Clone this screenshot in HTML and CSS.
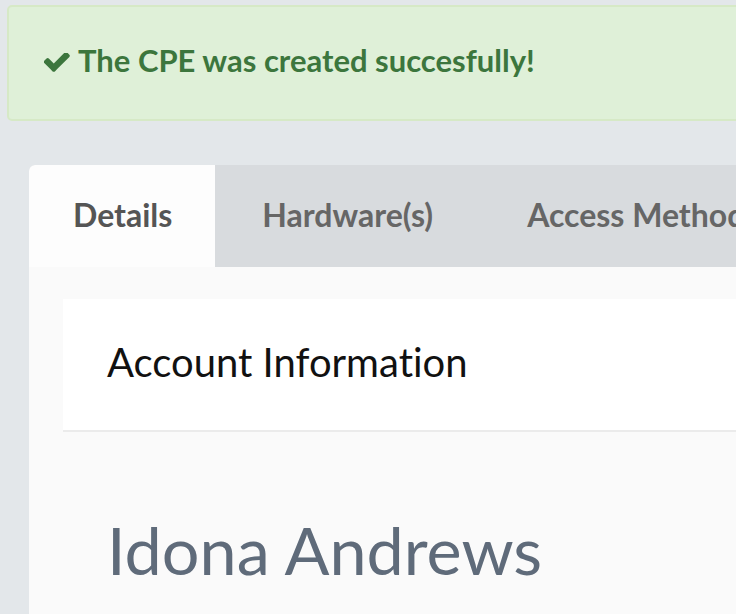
FILE: index.html
```html
<!DOCTYPE html>
<html>
<head>
<meta charset="utf-8">
<link rel="stylesheet" href="styles.css">
</head>
<body>
<div class="page">
  <div class="alert">
    <svg class="check" viewBox="140 400 1535 1130" width="26" height="19"><path d="M1671 566q0 40-28 68l-724 724-136 136q-28 28-68 28t-68-28l-136-136-362-362q-28-28-28-68t28-68l136-136q28-28 68-28t68 28l294 295 656-657q28-28 68-28t68 28l136 136q28 28 28 68z" fill="#3c763d"/></svg>
    <span>The CPE was created succesfully!</span>
  </div>
  <div class="card">
    <div class="tabs">
      <div class="tab active">Details</div>
      <div class="tab">Hardware(s)</div>
      <div class="tab">Access Methods</div>
    </div>
    <div class="tab-body">
      <div class="panel">
        <div class="panel-head">Account Information</div>
        <div class="panel-body">
          <h1 class="name">Idona Andrews</h1>
        </div>
      </div>
    </div>
  </div>
</div>
</body>
</html>
```
FILE: styles.css
```css
html, body { margin: 0; padding: 0; }
body {
  background: #e3e7ea;
  font-family: Lato, "Open Sans", sans-serif;
  font-variant-ligatures: none;
  overflow: hidden;
}
.page { width: 736px; height: 614px; overflow: hidden; padding-top: 5px; box-sizing: border-box; }
.alert {
  margin-left: 7px;
  width: 800px;
  height: 116px;
  box-sizing: border-box;
  background: #dff0d8;
  border: 2px solid #d6e9c6;
  border-radius: 5px;
  display: flex;
  align-items: center;
  padding: 0 0 6px 35px;
  color: #3c763d;
  font-weight: 700;
  font-size: 31px;
  gap: 8px;
}
.check { flex: none; margin-top: 4px; }
.card { margin: 44px 0 0 29px; width: 800px; }
.tabs { display: flex; height: 102px; background: #d8dbde; border-top-left-radius: 6px; }
.tab {
  display: flex; align-items: center; padding: 0 47px 4px 47px;
  font-size: 32px; font-weight: 700; color: #666;
}
.tab.active { background: #fdfdfd; color: #555; border-top-left-radius: 6px; padding: 0 43px 4px 44px; }
.tab-body { background: #fafafa; padding: 32px 0 0 34px; height: 400px; }
.panel-head {
  background: #fff; border-bottom: 2px solid #ebebeb;
  display: flex; align-items: center; padding: 0 0 6px 44px;
  box-sizing: border-box; height: 133px;
  font-size: 40px; color: #111;
}
.panel-body { padding: 84px 0 0 44px; }
.name { margin: 0; font-weight: 400; font-size: 66.5px; color: #5f6b7a; line-height: 1; }
```
